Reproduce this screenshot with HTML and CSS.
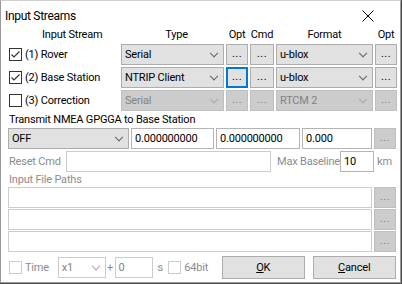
FILE: index.html
```html
<!DOCTYPE html>
<html lang="en">
<head>
  <meta charset="UTF-8">
  <title>Input Streams</title>
  <link rel="stylesheet" href="styles.css">
</head>
<body>

  <div class="dialog">
    <div class="titlebar">
      <span class="title">Input Streams</span>
      <span class="close">
        <svg width="12" height="12" viewBox="0 0 12 12"><path d="M0.5 0.5 L11.5 11.5 M11.5 0.5 L0.5 11.5" stroke="#000" stroke-width="1" fill="none"/></svg>
      </span>
    </div>

    <div class="content">
      <div class="streams">
        <div class="hd hd-stream">Input Stream</div>
        <div class="hd hd-type">Type</div>
        <div class="hd">Opt</div>
        <div class="hd">Cmd</div>
        <div class="hd">Format</div>
        <div class="hd">Opt</div>

        <label class="check"><span class="box on"><svg width="11" height="11" viewBox="0 0 11 11"><path d="M1.5 5.5 L4 8 L9.5 2.5" stroke="#333" stroke-width="1.2" fill="none"/></svg></span>(1) Rover</label>
        <div class="combo">Serial<span class="chev"></span></div>
        <div class="btn">...</div>
        <div class="btn">...</div>
        <div class="combo">u-blox<span class="chev"></span></div>
        <div class="btn">...</div>

        <label class="check"><span class="box on"><svg width="11" height="11" viewBox="0 0 11 11"><path d="M1.5 5.5 L4 8 L9.5 2.5" stroke="#333" stroke-width="1.2" fill="none"/></svg></span>(2) Base Station</label>
        <div class="combo">NTRIP Client<span class="chev"></span></div>
        <div class="btn focus">...</div>
        <div class="btn">...</div>
        <div class="combo">u-blox<span class="chev"></span></div>
        <div class="btn">...</div>

        <label class="check"><span class="box"></span>(3) Correction</label>
        <div class="combo off">Serial<span class="chev"></span></div>
        <div class="btn off">...</div>
        <div class="btn off">...</div>
        <div class="combo off">RTCM 2<span class="chev"></span></div>
        <div class="btn off">...</div>
      </div>

      <div class="caption">Transmit NMEA GPGGA to Base Station</div>
      <div class="row nmea">
        <div class="combo w-off">OFF<span class="chev"></span></div>
        <div class="field w-lat">0.000000000</div>
        <div class="field w-lon">0.000000000</div>
        <div class="field w-hgt">0.000</div>
        <div class="btn off">...</div>
      </div>

      <div class="row reset">
        <span class="dim lbl-reset">Reset Cmd</span>
        <div class="field off w-cmd"></div>
        <span class="dim lbl-max">Max Baseline</span>
        <div class="field w-max">10</div>
        <span class="dim lbl-km">km</span>
      </div>

      <div class="caption short dim">Input File Paths</div>
      <div class="paths">
        <div class="row path"><div class="field off w-path"></div><div class="btn off">...</div></div>
        <div class="row path"><div class="field off w-path"></div><div class="btn off">...</div></div>
        <div class="row path"><div class="field off w-path"></div><div class="btn off">...</div></div>
      </div>

      <div class="row bottom">
        <span class="box dimbox"></span>
        <span class="dim lbl-time">Time</span>
        <div class="combo blank w-speed">x1<span class="chev"></span></div>
        <span class="dim lbl-plus">+</span>
        <div class="field off w-ofs">0</div>
        <span class="dim lbl-s">s</span>
        <span class="box dimbox"></span>
        <span class="dim lbl-64">64bit</span>
        <div class="push w-ok"><u>O</u>K</div>
        <div class="push w-cancel"><u>C</u>ancel</div>
      </div>
    </div>
  </div>

</body>
</html>
```

FILE: styles.css
```css
/* dialog frame */
body {
  margin: 0;
  background: #4a4a4a;
  font-family: Roboto, "Liberation Sans", sans-serif;
  font-size: 11px;
  letter-spacing: -0.2px;
  color: #000;
  white-space: nowrap;
}

.dialog {
  width: 399px;
  height: 281px;
  background: #fff;
  border: 1px solid #9a9a9a;
  border-top-color: #cfcfcf;
}

.titlebar {
  height: 29px;
  display: flex;
  align-items: center;
  justify-content: space-between;
  padding-left: 4px;
}

.title {
  font-size: 12px;
  letter-spacing: -0.3px;
  padding-top: 1px;
}

.close {
  display: flex;
  width: 46px;
  justify-content: center;
  margin-right: 9px;
}

.content {
  padding: 0 4px 0 7px;
}

/* stream table */
.streams {
  display: grid;
  grid-template-columns: 111px 103px 22px 24px 97px 22px;
  grid-template-rows: 12px 21px 21px 21px;
  column-gap: 2px;
  row-gap: 2px;
}

.hd {
  text-align: center;
  line-height: 12px;
  margin-top: -1px;
}

.hd-stream {
  text-align: left;
  padding-left: 34px;
}

.hd-type {
  padding-left: 8px;
}

.check {
  display: flex;
  align-items: center;
  gap: 3px;
  padding-left: 1px;
}

.box {
  width: 11px;
  height: 11px;
  border: 1px solid #333;
  background: #fff;
  display: inline-flex;
  flex-shrink: 0;
}

.dimbox {
  border-color: #cccccc;
}

/* controls */
.combo {
  position: relative;
  height: 21px;
  box-sizing: border-box;
  background: #e1e1e1;
  border: 1px solid #adadad;
  padding-left: 3px;
  line-height: 19px;
}

.combo.off {
  background: #cccccc;
  border-color: #bfbfbf;
  color: #838383;
}

.combo.blank {
  background: #fff;
  border-color: #cccccc;
  color: #838383;
}

.chev {
  position: absolute;
  right: 6px;
  top: 8px;
  width: 5px;
  height: 5px;
  border-right: 1px solid #606060;
  border-bottom: 1px solid #606060;
  transform: rotate(45deg) translate(-2px, -2px);
}

.off .chev, .blank .chev {
  border-color: #a8a8a8;
}

.btn {
  height: 21px;
  box-sizing: border-box;
  background: #e1e1e1;
  border: 1px solid #adadad;
  text-align: center;
  line-height: 17px;
  letter-spacing: 0.5px;
}

.btn.focus {
  border: 2px solid #0078d7;
  line-height: 15px;
}

.btn.off {
  background: #cccccc;
  border-color: #bfbfbf;
  color: #838383;
}

.field {
  height: 21px;
  box-sizing: border-box;
  background: #fff;
  border: 1px solid #b4b4b4;
  padding-left: 3px;
  line-height: 19px;
}

.field.off {
  border-color: #cccccc;
  color: #838383;
}

.dim {
  color: #8c8c8c;
}

.caption {
  height: 17px;
  line-height: 18px;
  padding-left: 1px;
}

.caption.short {
  height: 15px;
  line-height: 16px;
}

.row {
  display: flex;
  align-items: center;
  gap: 2px;
}

.row .btn {
  width: 22px;
  flex-shrink: 0;
}

.nmea .w-off { width: 121px; }
.nmea .w-lat { width: 83px; }
.nmea .w-lon { width: 84px; }
.nmea .w-hgt { width: 70px; }

.reset {
  margin-top: 2px;
}

.lbl-reset { width: 55px; padding-left: 1px; }
.w-cmd { width: 205px; }
.lbl-max { margin-left: 4px; width: 61px; }
.w-max { width: 34px; }
.lbl-km { margin-left: 1px; }

.paths {
  display: flex;
  flex-direction: column;
  gap: 1px;
}

.path .w-path { width: 366px; }

.bottom {
  margin-top: 4px;
  height: 23px;
  gap: 0;
}

.bottom .box {
  margin-left: 1px;
}

.lbl-time { margin-left: 3px; width: 33px; }
.w-speed { width: 48px; }
.lbl-plus { width: 9px; text-align: center; }
.w-ofs { width: 39px; }
.lbl-s { width: 14px; text-align: center; }
.lbl-64 { margin-left: 3px; width: 38px; }

.push {
  height: 23px;
  box-sizing: border-box;
  background: #e1e1e1;
  border: 1px solid #adadad;
  text-align: center;
  line-height: 21px;
}

.w-ok { width: 83px; }
.w-cancel { width: 84px; margin-left: 8px; }
```
